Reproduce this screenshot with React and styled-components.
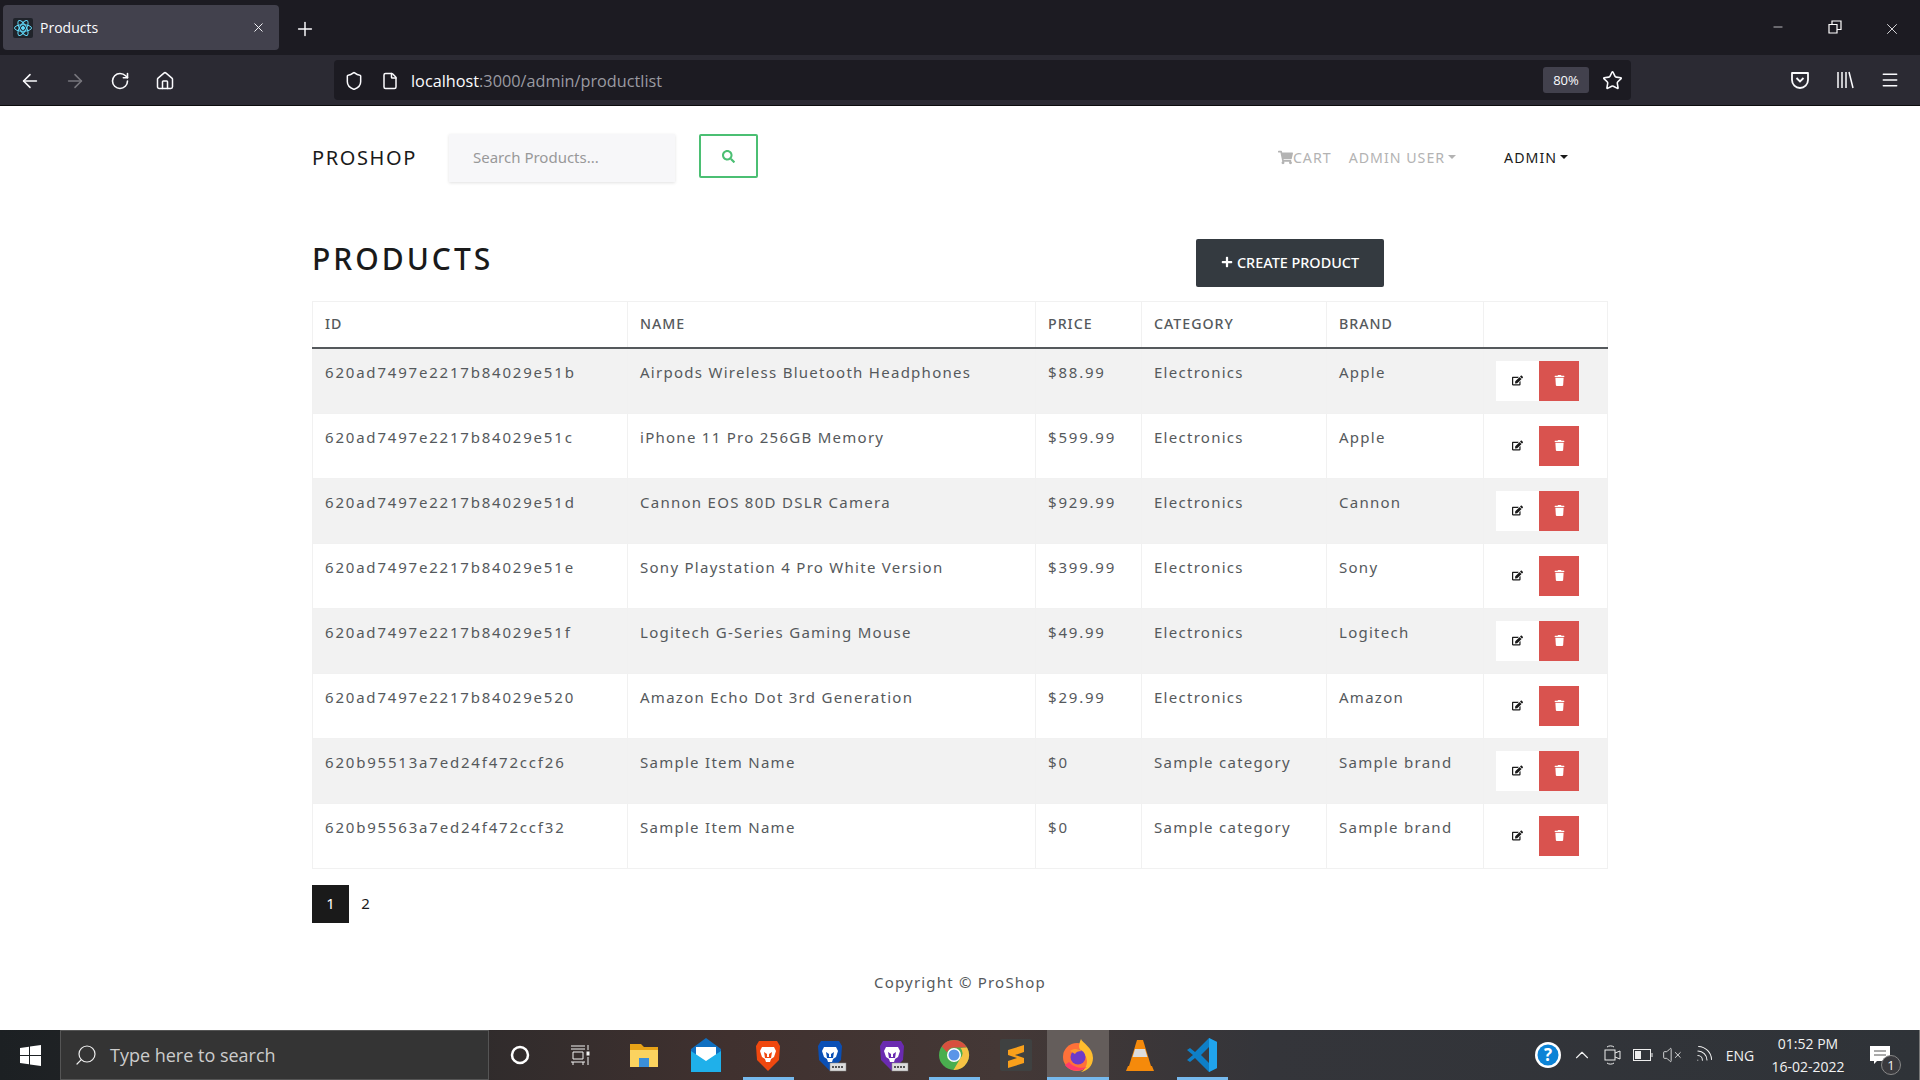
import React from "react"
import styled, { createGlobalStyle } from "styled-components"
import { ArrowLeft, ArrowRight, RotateCw, Home, Shield, File, Star, Menu, X, Plus, Minus, ChevronUp, Search as SearchLine, VolumeX, Wifi } from "lucide-react"
import { FaShoppingCart, FaSearch, FaEdit, FaTrash, FaPlus } from "react-icons/fa"

const GlobalStyle = createGlobalStyle`
  html, body {
    margin: 0;
    padding: 0;
    background: #fff;
    overflow: hidden;
  }
  * {
    box-sizing: border-box;
  }
`

const Screen = styled.div`
  width: 1920px;
  height: 1080px;
  display: flex;
  flex-direction: column;
  font-family: "Noto Sans", "Open Sans", sans-serif;
`

/* browser chrome */
const TabStrip = styled.div`
  height: 55px;
  flex: none;
  display: flex;
  align-items: flex-start;
  padding: 5px 0 0 3px;
  background: #1c1b22;
  color: #fbfbfe;
`

const Tab = styled.div`
  width: 276px;
  height: 45px;
  display: flex;
  align-items: center;
  padding: 0 13px 0 10px;
  border-radius: 4px;
  background: #42414d;
  font-size: 14px;
  font-family: "Open Sans", sans-serif;
`

const TabTitle = styled.span`
  margin-left: 7px;
  flex: 1;
`

const Favicon = styled.svg`
  width: 20px;
  height: 20px;
  background: #20232a;
  border-radius: 2px;
`

const NewTab = styled.div`
  width: 52px;
  display: flex;
  justify-content: center;
  align-self: center;
  margin: -2px 0 0 0;
`

const WindowControls = styled.div`
  margin-left: auto;
  display: flex;
  align-self: center;
  margin-top: -3px;
`

const WindowButton = styled.div`
  width: 57px;
  display: flex;
  justify-content: center;
`

const Toolbar = styled.div`
  height: 51px;
  flex: none;
  display: flex;
  align-items: flex-start;
  padding-top: 5px;
  background: #2b2a33;
  border-bottom: 1px solid #0c0c0d;
  color: #fbfbfe;
`

const NavButtons = styled.div`
  width: 334px;
  height: 40px;
  display: flex;
  align-items: center;
  padding: 1px 0 0 18px;
  gap: 21px;
`

const ToolIcon = styled.span`
  display: flex;
  width: 24px;
  justify-content: center;
  color: ${({ $dim }) => ($dim ? "#77767d" : "#fbfbfe")};
`

const UrlBar = styled.div`
  width: 1297px;
  height: 40px;
  display: flex;
  align-items: center;
  padding: 0 8px 0 10px;
  border-radius: 4px;
  background: #1c1b22;
`

const ShieldIcon = styled(Shield)`
  margin-top: 1px;
`

const FileIcon = styled(File)`
  margin: 1px 0 0 17px;
`

const UrlText = styled.div`
  margin: 2px 0 0 12px;
  flex: 1;
  font-family: "Open Sans", sans-serif;
  font-size: 16.25px;
  color: #fbfbfe;
  span {
    color: #9a9aa1;
  }
`

const ZoomPill = styled.div`
  width: 46px;
  height: 26px;
  display: flex;
  align-items: center;
  justify-content: center;
  margin-right: 13px;
  border-radius: 3px;
  background: #42414d;
  font-size: 13px;
  font-family: "Open Sans", sans-serif;
`

const RightTools = styled.div`
  flex: 1;
  height: 40px;
  display: flex;
  align-items: center;
  justify-content: flex-end;
  gap: 21px;
  padding-right: 18px;
`

/* page */
const Page = styled.div`
  flex: 1;
  min-height: 0;
  background: #fff;
  color: #55595c;
`

const Container = styled.div`
  width: 1296px;
  margin: 0 auto;
`

const NavBar = styled.nav`
  display: flex;
  align-items: flex-start;
  padding-top: 28px;
  height: 133px;
`

const Brand = styled.a`
  width: 137px;
  line-height: 48px;
  font-size: 20px;
  letter-spacing: 1.6px;
  color: #1a1a1a;
`

const SearchInput = styled.div`
  width: 226px;
  height: 48px;
  display: flex;
  align-items: center;
  padding: 0 0 2px 24px;
  background: #f7f7f9;
  box-shadow: 0 1px 3px rgba(0, 0, 0, 0.12);
  font-size: 15px;
  color: #999;
`

const SearchButton = styled.button`
  width: 59px;
  height: 44px;
  margin-left: 24px;
  display: flex;
  align-items: center;
  justify-content: center;
  border: 2px solid #4bbf73;
  border-radius: 2px;
  background: #fff;
  color: #4bbf73;
  font-size: 13px;
  padding: 0;
`

const NavLinks = styled.div`
  margin-left: auto;
  margin-right: 40px;
  height: 46px;
  display: flex;
  align-items: center;
  font-size: 14.2px;
  letter-spacing: 1px;
  color: #b3b3b3;
`

const NavLink = styled.span`
  display: flex;
  align-items: center;
  margin-left: ${({ $gap }) => $gap || 0}px;
  color: ${({ $active }) => ($active ? "#1a1a1a" : "inherit")};
`

const Caret = styled.i`
  margin-left: 3px;
  border-top: 4px solid currentColor;
  border-left: 4px solid transparent;
  border-right: 4px solid transparent;
`

const TitleRow = styled.div`
  display: flex;
  justify-content: space-between;
  padding-right: 224px;
  height: 62px;
`

const Title = styled.h1`
  margin: 0;
  line-height: 40px;
  font-size: 30px;
  font-weight: 500;
  letter-spacing: 3px;
  color: #1a1a1a;
`

const CreateButton = styled.button`
  width: 188px;
  height: 48px;
  display: flex;
  align-items: center;
  justify-content: center;
  gap: 4px;
  border: 0;
  border-radius: 2px;
  background: #343a40;
  color: #fff;
  font-family: inherit;
  font-size: 14.4px;
  font-weight: 500;
  padding: 0 0 2px;
`

const Table = styled.table`
  width: 1295px;
  table-layout: fixed;
  border-collapse: collapse;
  font-size: 15px;
  letter-spacing: 1.27px;
`

const Col = styled.col`
  width: ${({ $w }) => $w}px;
`

const Th = styled.th`
  height: 46px;
  padding: 0 12px 1px;
  text-align: left;
  font-weight: 500;
  font-size: 14.2px;
  letter-spacing: 1px;
  border: 1px solid #f1f1f1;
  border-bottom: 2px solid #55595c;
`

const Row = styled.tr`
  background: ${({ $striped }) => ($striped ? "#f2f2f2" : "#fff")};
`

const Td = styled.td`
  height: 65px;
  padding: 11px 12px 12px;
  vertical-align: top;
  line-height: 24px;
  border: 1px solid #f1f1f1;
  white-space: nowrap;
  letter-spacing: ${({ $digits }) => ($digits ? "1.8px" : "inherit")};
`

const ActionCell = styled(Td)`
  padding-top: 12px;
`

const Actions = styled.div`
  display: flex;
`

const ActionButton = styled.button`
  width: ${({ $danger }) => ($danger ? 40 : 43)}px;
  height: 40px;
  padding: 0;
  border: 0;
  display: flex;
  align-items: center;
  justify-content: center;
  font-size: 11px;
  background: ${({ $danger }) => ($danger ? "#d9534f" : "#fff")};
  color: ${({ $danger }) => ($danger ? "#fff" : "#1a1a1a")};
`

const Pager = styled.div`
  display: flex;
  margin-top: 16px;
  font-size: 15px;
`

const PageItem = styled.a`
  width: ${({ $active }) => ($active ? 37 : 33)}px;
  height: 38px;
  display: flex;
  align-items: center;
  justify-content: center;
  padding-bottom: 2px;
  background: ${({ $active }) => ($active ? "#1a1a1a" : "#fff")};
  color: ${({ $active }) => ($active ? "#fff" : "#1a1a1a")};
`

const Footer = styled.footer`
  margin-top: 47px;
  line-height: 24px;
  text-align: center;
  font-size: 15px;
  letter-spacing: 1.2px;
`

/* windows taskbar */
const Taskbar = styled.div`
  height: 50px;
  flex: none;
  display: flex;
  align-items: stretch;
  background: linear-gradient(90deg, #1c2023 0%, #2c2a2b 22%, #40312f 38%, #443836 52%, #34353a 66%, #2f3338 100%);
  color: #f2f2f2;
`

const StartButton = styled.div`
  width: 60px;
  display: flex;
  align-items: center;
  justify-content: center;
`

const SearchBox = styled.div`
  width: 429px;
  display: flex;
  align-items: center;
  padding-left: 13px;
  gap: 12px;
  background: #343434;
  border: 1px solid #555;
  font-family: "Open Sans", sans-serif;
  font-size: 18px;
  color: #ccc;
`

const MirroredSearch = styled(SearchLine)`
  transform: scaleX(-1);
`

const AppSlot = styled.div`
  position: relative;
  width: 62px;
  display: flex;
  align-items: center;
  justify-content: center;
  background: ${({ $focus }) => ($focus ? "#645d5b" : "transparent")};
  &::after {
    content: "";
    display: ${({ $open }) => ($open ? "block" : "none")};
    position: absolute;
    bottom: 0;
    left: ${({ $focus }) => ($focus ? 0 : 6)}px;
    right: ${({ $focus }) => ($focus ? 0 : 5)}px;
    height: 3px;
    background: #76b9ed;
  }
`

const Tray = styled.div`
  margin-left: auto;
  display: flex;
  align-items: stretch;
`

const TrayCell = styled.div`
  position: relative;
  width: ${({ $w }) => $w}px;
  display: flex;
  flex-direction: column;
  align-items: center;
  justify-content: center;
  font-family: "Open Sans", sans-serif;
  font-size: 14px;
`

const WifiIcon = styled(Wifi)`
  transform: rotate(45deg);
`

const ClockLine = styled.div`
  line-height: 23px;
`

const NoteBadge = styled.span`
  position: absolute;
  right: 3px;
  bottom: 5px;
  width: 20px;
  height: 20px;
  border-radius: 50%;
  border: 1px solid #888;
  background: #3a3a3e;
  font-size: 13px;
  line-height: 18px;
  text-align: center;
`

const DesktopPeek = styled.div`
  width: 16px;
  border-right: 1px solid #777;
`

const products = [
  ["620ad7497e2217b84029e51b", "Airpods Wireless Bluetooth Headphones", "$88.99", "Electronics", "Apple"],
  ["620ad7497e2217b84029e51c", "iPhone 11 Pro 256GB Memory", "$599.99", "Electronics", "Apple"],
  ["620ad7497e2217b84029e51d", "Cannon EOS 80D DSLR Camera", "$929.99", "Electronics", "Cannon"],
  ["620ad7497e2217b84029e51e", "Sony Playstation 4 Pro White Version", "$399.99", "Electronics", "Sony"],
  ["620ad7497e2217b84029e51f", "Logitech G-Series Gaming Mouse", "$49.99", "Electronics", "Logitech"],
  ["620ad7497e2217b84029e520", "Amazon Echo Dot 3rd Generation", "$29.99", "Electronics", "Amazon"],
  ["620b95513a7ed24f472ccf26", "Sample Item Name", "$0", "Sample category", "Sample brand"],
  ["620b95563a7ed24f472ccf32", "Sample Item Name", "$0", "Sample category", "Sample brand"],
]

const columns = [315, 408, 106, 185, 157, 124]

const BraveLogo = ({ color, badge }) => (
  <svg width="36" height="36" viewBox="0 0 36 36">
    <path d="M9 4h18l3 5-1 14-11 11L7 23 6 9z" fill={color} />
    <path d="M12 10h12l2 4-2 6-3 2-1 3h-4l-1-3-3-2-2-6z" fill="#fff" />
    <path d="M14 15l3 2v3h2v-3l3-2-1 6h-6z" fill={color} />
    {badge && <rect x="18" y="26" width="16" height="8" fill="#ddd" stroke="#888" strokeWidth=".5" />}
    {badge && <path d="M20 30h12" stroke="#555" strokeWidth="2" strokeDasharray="2 1" />}
  </svg>
)

const ChromeLogo = () => (
  <svg width="32" height="32" viewBox="0 0 32 32">
    <circle cx="16" cy="16" r="15" fill="#4aae4f" />
    <path d="M16 1a15 15 0 0 1 13 7.5H16a7.5 7.5 0 0 0-7 4.8L3.8 7.4A15 15 0 0 1 16 1z" fill="#d8503f" />
    <path d="M29 8.500a15 15 0 0 1-13.500 22.500l6.600-11.200A7.500 7.500 0 0 0 22.500 9z" fill="#f6c244" />
    <circle cx="16" cy="16" r="7" fill="#fff" />
    <circle cx="16" cy="16" r="5.500" fill="#5a95e8" />
  </svg>
)

const FirefoxLogo = () => (
  <svg width="34" height="36" viewBox="0 0 34 36">
    <circle cx="16" cy="20" r="14" fill="#ff7139" />
    <path d="M20 2c1 4 12 8 12 19 0 8-6 13-12 14 6-4 7-10 5-15-2-4-6-6-7-10 0-3 1-6 2-8z" fill="#ffbd2e" />
    <path d="M4 28c4 6 14 8 22 2-6 2-14 0-18-5z" fill="#ff3b6b" />
    <circle cx="17" cy="20" r="7.500" fill="#6e3bc9" />
    <path d="M9 14c4-3 9-2 12 0-4 0-6 1-7 3z" fill="#ff9a2e" />
  </svg>
)

const Vlc = () => (
  <svg width="28" height="36" viewBox="0 0 28 36">
    <path d="M11 3h6l8 26H3z" fill="#f58a0b" />
    <path d="M9 12h10l2.400 8H6.600z" fill="#ddd" />
    <path d="M2 29h24l2 5H0z" fill="#f58a0b" />
  </svg>
)

const VsCode = () => (
  <svg width="32" height="36" viewBox="0 0 32 36">
    <path d="M23 1l8 4v26l-8 4L9 21l-5 4-3-2 6-5-6-5 3-2 5 4z" fill="#0e7fc7" />
    <path d="M23 1l8 4v26l-8 4z" fill="#20a4ee" />
    <path d="M23 10l-8 8 8 8z" fill="#3a3a3f" />
  </svg>
)

const Explorer = () => (
  <svg width="30" height="28" viewBox="0 0 30 28">
    <path d="M1 3h11l3 3h14v20H1z" fill="#e8a317" />
    <path d="M1 9h28v17H1z" fill="#fbd35f" />
    <path d="M10 17h10v9H10z" fill="#3b8fd9" />
  </svg>
)

const MailIcon = () => (
  <svg width="30" height="36" viewBox="0 0 30 36">
    <path d="M15 1L0 12v23h30V12z" fill="#0f6fc1" />
    <path d="M5 10h20v9l-10 6-10-6z" fill="#fff" />
    <path d="M0 14l15 10 15-10v21H0z" fill="#1fb0ea" />
  </svg>
)

const Sublime = () => (
  <svg width="32" height="32" viewBox="0 0 32 32">
    <rect width="32" height="32" rx="2" fill="#3f4141" />
    <path d="M8 11l16-5v7l-9 3 9 3v5L8 29v-7l9-3-9-3z" fill="#f9a01b" />
  </svg>
)

export default function App() {
  return (
    <Screen>
      <GlobalStyle />
      <TabStrip>
        <Tab>
          <Favicon viewBox="0 0 20 20" fill="none" stroke="#61dafb" strokeWidth="1">
            <ellipse cx="10" cy="10" rx="8.500" ry="3.300" />
            <ellipse cx="10" cy="10" rx="8.500" ry="3.300" transform="rotate(60 10 10)" />
            <ellipse cx="10" cy="10" rx="8.500" ry="3.300" transform="rotate(120 10 10)" />
            <circle cx="10" cy="10" r="1.500" fill="#61dafb" />
          </Favicon>
          <TabTitle>Products</TabTitle>
          <X size={15} strokeWidth={1.5} />
        </Tab>
        <NewTab><Plus size={22} strokeWidth={1.6} /></NewTab>
        <WindowControls>
          <WindowButton><Minus size={14} strokeWidth={1.2} /></WindowButton>
          <WindowButton>
            <svg width="14" height="14" viewBox="0 0 14 14" fill="none" stroke="#fff" strokeWidth="1.200">
              <path d="M1 4.500h8v8.500H1zM4 4.500V1h9v8.500H9" />
            </svg>
          </WindowButton>
          <WindowButton><X size={18} strokeWidth={1.1} /></WindowButton>
        </WindowControls>
      </TabStrip>

      <Toolbar>
        <NavButtons>
          <ToolIcon><ArrowLeft size={22} strokeWidth={1.7} /></ToolIcon>
          <ToolIcon $dim><ArrowRight size={22} strokeWidth={1.7} /></ToolIcon>
          <ToolIcon><RotateCw size={20} strokeWidth={1.9} /></ToolIcon>
          <ToolIcon><Home size={20} strokeWidth={1.8} /></ToolIcon>
        </NavButtons>
        <UrlBar>
          <ShieldIcon size={20} strokeWidth={1.8} color="#fbfbfe" />
          <FileIcon size={18} strokeWidth={2} color="#fbfbfe" />
          <UrlText>localhost<span>:3000/admin/productlist</span></UrlText>
          <ZoomPill>80%</ZoomPill>
          <Star size={21} strokeWidth={1.8} color="#fbfbfe" />
        </UrlBar>
        <RightTools>
          <ToolIcon>
            <svg width="20" height="20" viewBox="0 0 20 20" fill="none" stroke="#fbfbfe" strokeWidth="1.800">
              <path d="M2 3h16v7a8 8 0 0 1-16 0z" strokeLinejoin="round" />
              <path d="M6.500 8l3.500 3.500L13.500 8" />
            </svg>
          </ToolIcon>
          <ToolIcon>
            <svg width="20" height="20" viewBox="0 0 20 20" fill="none" stroke="#fbfbfe" strokeWidth="1.500">
              <path d="M3 2v16M7 2v16M11 2v16M14 2l4 16" />
            </svg>
          </ToolIcon>
          <ToolIcon><Menu size={20} strokeWidth={1.8} /></ToolIcon>
        </RightTools>
      </Toolbar>

      <Page>
        <Container>
          <NavBar>
            <Brand>PROSHOP</Brand>
            <SearchInput>Search Products...</SearchInput>
            <SearchButton><FaSearch /></SearchButton>
            <NavLinks>
              <NavLink><FaShoppingCart size={15} />CART</NavLink>
              <NavLink $gap={17}>ADMIN USER<Caret /></NavLink>
              <NavLink $gap={48} $active>ADMIN<Caret /></NavLink>
            </NavLinks>
          </NavBar>

          <TitleRow>
            <Title>PRODUCTS</Title>
            <CreateButton><FaPlus size={12} />CREATE PRODUCT</CreateButton>
          </TitleRow>

          <Table>
            <colgroup>
              {columns.map((w, i) => <Col key={i} $w={w} />)}
            </colgroup>
            <thead>
              <tr>
                <Th>ID</Th>
                <Th>NAME</Th>
                <Th>PRICE</Th>
                <Th>CATEGORY</Th>
                <Th>BRAND</Th>
                <Th />
              </tr>
            </thead>
            <tbody>
              {products.map(([id, name, price, category, brand], i) => (
                <Row key={id} $striped={i % 2 === 0}>
                  <Td $digits>{id}</Td>
                  <Td>{name}</Td>
                  <Td $digits>{price}</Td>
                  <Td>{category}</Td>
                  <Td>{brand}</Td>
                  <ActionCell>
                    <Actions>
                      <ActionButton><FaEdit /></ActionButton>
                      <ActionButton $danger><FaTrash /></ActionButton>
                    </Actions>
                  </ActionCell>
                </Row>
              ))}
            </tbody>
          </Table>

          <Pager>
            <PageItem $active>1</PageItem>
            <PageItem>2</PageItem>
          </Pager>

          <Footer>Copyright © ProShop</Footer>
        </Container>
      </Page>

      <Taskbar>
        <StartButton>
          <svg width="21" height="21" viewBox="0 0 21 21" fill="#fff">
            <path d="M0 3l9-1.300V10H0zM10 1.500L21 0v10H10zM0 11h9v8.300L0 18zM10 11h11v10l-11-1.500z" />
          </svg>
        </StartButton>
        <SearchBox>
          <MirroredSearch size={24} strokeWidth={1.2} color="#eee" />
          Type here to search
        </SearchBox>
        <AppSlot>
          <svg width="20" height="20" viewBox="0 0 20 20" fill="none" stroke="#fff" strokeWidth="2.500">
            <circle cx="10" cy="10" r="8" />
          </svg>
        </AppSlot>
        <AppSlot>
          <svg width="22" height="20" viewBox="0 0 22 20" fill="none" stroke="#f2f2f2" strokeWidth="1">
            <path d="M0 1h14M0 4h14M2 7h10v7H2zM0 17h14M2 17v3M12 17v3M17 0v5M17 12v8" />
            <rect x="16" y="7" width="2" height="3" fill="#f2f2f2" />
          </svg>
        </AppSlot>
        <AppSlot><Explorer /></AppSlot>
        <AppSlot><MailIcon /></AppSlot>
        <AppSlot $open><BraveLogo color="#f0480f" /></AppSlot>
        <AppSlot><BraveLogo color="#0a4fb5" badge /></AppSlot>
        <AppSlot><BraveLogo color="#6a2bb0" badge /></AppSlot>
        <AppSlot $open><ChromeLogo /></AppSlot>
        <AppSlot><Sublime /></AppSlot>
        <AppSlot $open $focus><FirefoxLogo /></AppSlot>
        <AppSlot><Vlc /></AppSlot>
        <AppSlot $open><VsCode /></AppSlot>
        <Tray>
          <TrayCell $w={35}>
            <svg width="28" height="28" viewBox="0 0 28 28">
              <circle cx="14" cy="14" r="13" fill="#fff" />
              <circle cx="14" cy="14" r="10.500" fill="#0c83d6" />
              <text x="14" y="20" textAnchor="middle" fontSize="17" fontWeight="700" fill="#fff" fontFamily="Open Sans">?</text>
            </svg>
          </TrayCell>
          <TrayCell $w={33}><ChevronUp size={22} strokeWidth={1.2} /></TrayCell>
          <TrayCell $w={30}>
            <svg width="18" height="22" viewBox="0 0 18 22" fill="none" stroke="#eee" strokeWidth="1">
              <rect x="1" y="6" width="10" height="10" />
              <path d="M11 9l5-2v8l-5-2M3 3c2-1.500 5-1.500 7 0M3 19c2 1.500 5 1.500 7 0" />
            </svg>
          </TrayCell>
          <TrayCell $w={29}>
            <svg width="20" height="12" viewBox="0 0 20 12" fill="none" stroke="#eee" strokeWidth="1">
              <rect x=".5" y=".5" width="17" height="11" />
              <rect x="2" y="2" width="6" height="8" fill="#eee" stroke="none" />
              <path d="M19 4v4" />
            </svg>
          </TrayCell>
          <TrayCell $w={29}><VolumeX size={20} strokeWidth={1} /></TrayCell>
          <TrayCell $w={34}><WifiIcon size={22} strokeWidth={1.1} /></TrayCell>
          <TrayCell $w={40}>ENG</TrayCell>
          <TrayCell $w={96}>
            <ClockLine>01:52 PM</ClockLine>
            <ClockLine>16-02-2022</ClockLine>
          </TrayCell>
          <TrayCell $w={48}>
            <svg width="20" height="18" viewBox="0 0 20 18">
              <path d="M0 0h20v15H7l-3 3v-3H0z" fill="#fff" />
              <path d="M4 5h12M4 9h12" stroke="#555" strokeWidth="1" />
            </svg>
            <NoteBadge>1</NoteBadge>
          </TrayCell>
          <DesktopPeek />
        </Tray>
      </Taskbar>
    </Screen>
  )
}
